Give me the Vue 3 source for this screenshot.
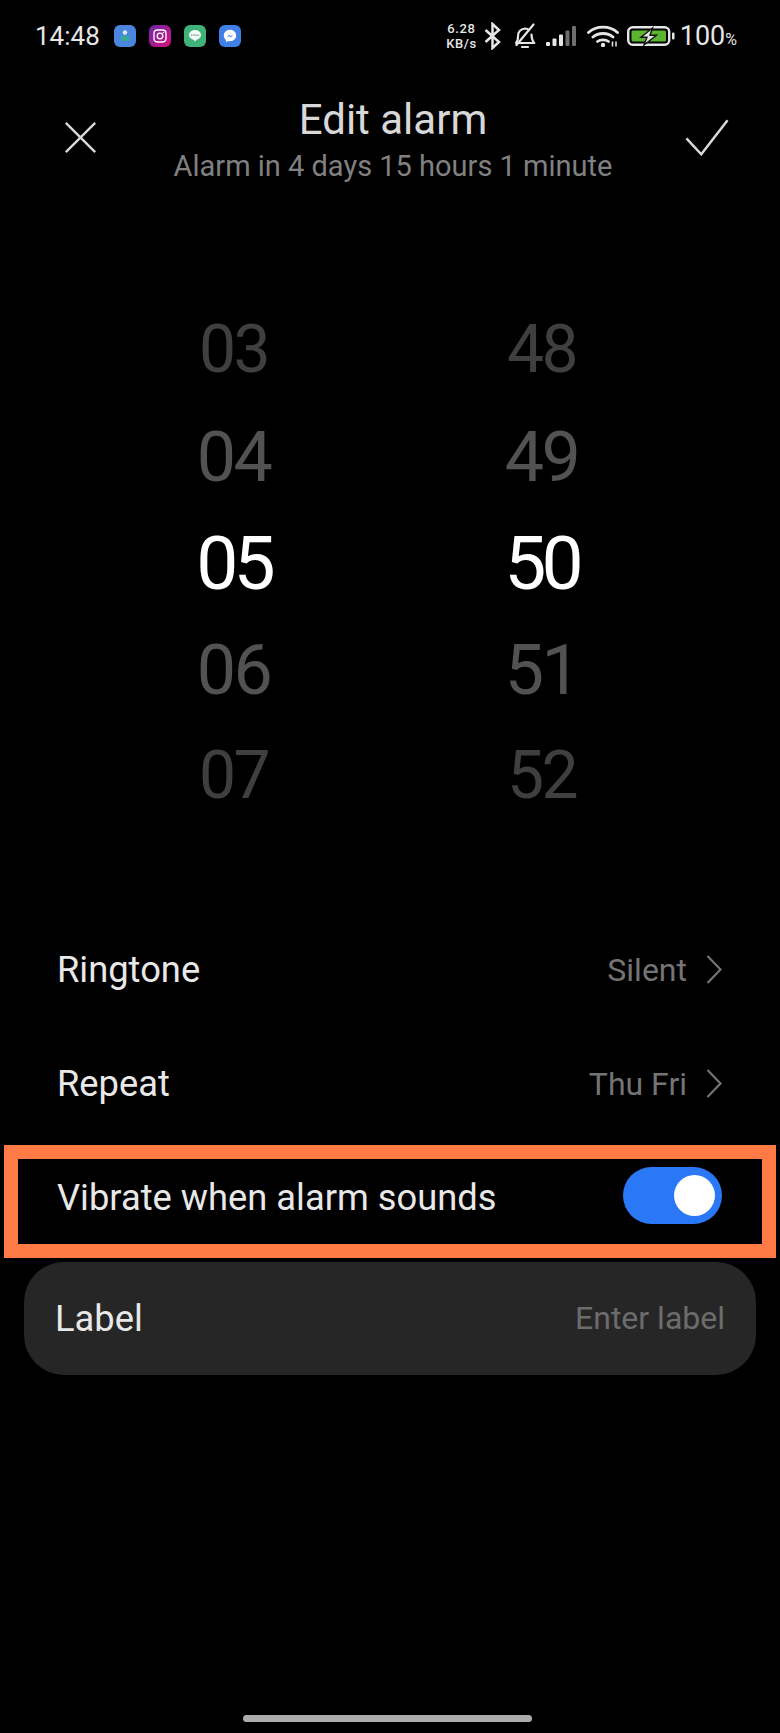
<script setup>
const hours = [
  { text: '03', level: 'far' },
  { text: '04', level: 'near' },
  { text: '05', level: 'current' },
  { text: '06', level: 'near' },
  { text: '07', level: 'far' },
]
const minutes = [
  { text: '48', level: 'far' },
  { text: '49', level: 'near' },
  { text: '50', level: 'current' },
  { text: '51', level: 'near' },
  { text: '52', level: 'far' },
]
</script>

<template>
  <div class="screen">
    <header class="status-bar">
      <div class="status-left">
        <span class="clock">14:48</span>
        <div class="app-icons">
          <svg class="app-icon" viewBox="0 0 22 22">
            <rect width="22" height="22" rx="6" fill="#4a86e0" />
            <circle cx="11" cy="7.5" r="2.2" fill="#dfeafa" />
            <path d="M6.5 16v-3.2c0-1.6 2-2.6 4.5-2.6s4.5 1 4.5 2.6V16z" fill="#37a69b" />
          </svg>
          <svg class="app-icon" viewBox="0 0 22 22">
            <defs>
              <linearGradient id="insta" x1="0" y1="0" x2="1" y2="1">
                <stop offset="0" stop-color="#6b28a8" />
                <stop offset="1" stop-color="#d8127c" />
              </linearGradient>
            </defs>
            <rect width="22" height="22" rx="6" fill="url(#insta)" />
            <rect x="5" y="5" width="12" height="12" rx="3.4" fill="none" stroke="#fff" stroke-width="1.3" />
            <circle cx="11" cy="11" r="2.8" fill="none" stroke="#fff" stroke-width="1.3" />
            <circle cx="14.5" cy="7.5" r=".8" fill="#fff" />
          </svg>
          <svg class="app-icon" viewBox="0 0 22 22">
            <rect width="22" height="22" rx="6" fill="#3fb27a" />
            <path d="M11 5c-3.4 0-6 2.2-6 5 0 2.6 2.2 4.500 5.200 4.900l.3 1.900 2.300-2.100c2.400-.7 4.200-2.500 4.200-4.700 0-2.800-2.600-5-6-5z" fill="#f2fbf6" />
            <path d="M7.800 9.400v1.500M10 9.400v1.500M12 9.400v1.500M14.200 9.400v1.500" stroke="#3f7f62" stroke-width=".9" />
          </svg>
          <svg class="app-icon" viewBox="0 0 22 22">
            <rect width="22" height="22" rx="6" fill="#3f7fe6" />
            <path d="M11 4.800c-3.500 0-6.200 2.500-6.200 5.800 0 1.800.8 3.300 2.100 4.300v2.300l2.100-1.200c.6.200 1.300.3 2 .3 3.500 0 6.200-2.500 6.200-5.700S14.500 4.800 11 4.800z" fill="#fff" />
            <path d="M7.600 12.500l2.500-2.800 1.600 1.500 2.700-1.700-2.500 2.900-1.600-1.500z" fill="#3f7fe6" />
          </svg>
        </div>
      </div>
      <div class="status-right">
        <div class="speed"><span>6.28</span><span>KB/s</span></div>
        <svg class="bt" viewBox="0 0 17 28">
          <path d="M1.500 8l13.500 12-6.500 6V2L15 8 1.500 20" fill="none" stroke="#e6e6e6" stroke-width="2.500" />
        </svg>
        <svg class="bell" viewBox="0 0 22 26">
          <path d="M2 20c1.500-1.500 2-3.500 2-6.500 0-4.500 2.500-7.500 7-8 1.500 0 3 .5 4 1.500M17.500 11.500c.2 3.800.6 6.500 2.800 8.500H2" fill="none" stroke="#e6e6e6" stroke-width="2.200" stroke-linejoin="round" stroke-linecap="round" />
          <path d="M8 24h6" stroke="#e6e6e6" stroke-width="2.200" stroke-linecap="round" />
          <path d="M2.500 22L19.500 1.500" stroke="#e6e6e6" stroke-width="2.200" stroke-linecap="round" />
        </svg>
        <svg class="signal" viewBox="0 0 30 20">
          <rect x="0" y="16" width="4" height="4" rx="1" fill="#e6e6e6" />
          <rect x="6.500" y="12.500" width="4" height="7.500" rx="1" fill="#e6e6e6" />
          <rect x="13" y="8.500" width="4" height="11.500" rx="1" fill="#e6e6e6" />
          <rect x="19.500" y="4.500" width="4" height="15.500" rx="1" fill="#6e6e6e" />
          <rect x="26" y="0" width="4" height="20" rx="1" fill="#6e6e6e" />
        </svg>
        <svg class="wifi" viewBox="0 0 32 22">
          <path d="M1.500 7.500c7.800-7.300 21.200-7.300 29 0M6 12c5.300-4.700 14.700-4.700 20 0M10.500 16.500c2.800-2.200 8.200-2.200 11 0" fill="none" stroke="#e6e6e6" stroke-width="2.800" stroke-linecap="round" />
          <circle cx="16" cy="20" r="2.200" fill="#e6e6e6" />
          <path d="M25.500 16.500v5M29 16.500v5" stroke="#e6e6e6" stroke-width="1.500" />
        </svg>
        <svg class="battery" viewBox="0 0 48 20">
          <rect x="1.200" y="1.200" width="41" height="17.600" rx="4.500" fill="none" stroke="#e6e6e6" stroke-width="2.400" />
          <rect x="4.500" y="4.500" width="34.500" height="11" rx="1.500" fill="#5cb531" />
          <path d="M25.500 2L14 11.200h6L17 19l12.500-9.800h-6.500z" fill="#e6e6e6" stroke="#111" stroke-width="1.400" />
          <rect x="45" y="6.500" width="2.500" height="7" rx="1" fill="#e6e6e6" />
        </svg>
        <span class="battery-level">100<small>%</small></span>
      </div>
    </header>

    <div class="title-bar">
      <svg class="bar-icon" viewBox="0 0 36 36">
        <path d="M2 2l32 32M34 2L2 34" fill="none" stroke="#d8d8d8" stroke-width="2.600" />
      </svg>
      <div class="title-text">
        <h1>Edit alarm</h1>
        <p>Alarm in 4 days 15 hours 1 minute</p>
      </div>
      <svg class="bar-icon check" viewBox="0 0 46 38">
        <path d="M1.500 20L17 36.500 44.500 1" fill="none" stroke="#d8d8d8" stroke-width="2.600" />
      </svg>
    </div>

    <div class="wheel">
      <div class="wheel-col">
        <div v-for="item in hours" :key="item.text" class="wheel-item" :class="item.level">{{ item.text }}</div>
      </div>
      <div class="wheel-col">
        <div v-for="item in minutes" :key="item.text" class="wheel-item" :class="item.level">{{ item.text }}</div>
      </div>
    </div>

    <div class="settings">
      <div class="row">
        <span class="row-name">Ringtone</span>
        <div class="row-value">
          <span>Silent</span>
          <svg class="chevron" viewBox="0 0 16 29"><path d="M1.500 1l13 13.500-13 13.500" fill="none" stroke="#747474" stroke-width="2.200" /></svg>
        </div>
      </div>
      <div class="row">
        <span class="row-name">Repeat</span>
        <div class="row-value">
          <span>Thu Fri</span>
          <svg class="chevron" viewBox="0 0 16 29"><path d="M1.500 1l13 13.500-13 13.500" fill="none" stroke="#747474" stroke-width="2.200" /></svg>
        </div>
      </div>
      <div class="row highlighted">
        <span class="row-name">Vibrate when alarm sounds</span>
        <div class="toggle"><span class="knob"></span></div>
      </div>
      <div class="label-card">
        <span class="row-name">Label</span>
        <span class="label-hint">Enter label</span>
      </div>
    </div>

    <div class="home-bar"></div>
  </div>
</template>

<style scoped>
.screen {
  position: relative;
  width: 780px;
  height: 1733px;
  background: #000;
  color: #fff;
  font-family: Roboto, "Noto Sans", sans-serif;
  overflow: hidden;
}

.status-bar {
  height: 72px;
  box-sizing: border-box;
  padding: 0 43px 0 35px;
  display: flex;
  align-items: center;
  justify-content: space-between;
}

.status-left {
  display: flex;
  align-items: center;
  gap: 14px;
}

.clock {
  font-size: 26px;
  color: #e6e6e6;
}

.app-icons {
  display: flex;
  gap: 13px;
}

.app-icon {
  width: 22px;
  height: 22px;
}

.status-right {
  display: flex;
  align-items: center;
}

.speed {
  display: flex;
  flex-direction: column;
  align-items: center;
  font-size: 13px;
  line-height: 15.500px;
  font-weight: 500;
  letter-spacing: .6px;
  color: #e6e6e6;
}

.bt {
  width: 17px;
  height: 28px;
  margin-left: 7px;
}

.bell {
  width: 22px;
  height: 26px;
  margin-left: 13px;
}

.signal {
  width: 30px;
  height: 20px;
  margin-left: 10px;
}

.wifi {
  width: 32px;
  height: 22px;
  margin-left: 11px;
}

.battery {
  width: 48px;
  height: 20px;
  margin-left: 8px;
}

.battery-level {
  margin-left: 5px;
  font-size: 27px;
  color: #e6e6e6;
}

.battery-level small {
  font-size: 16px;
}

.title-bar {
  height: 130px;
  padding: 0 51px 0 64px;
  display: flex;
  align-items: center;
  justify-content: space-between;
}

.bar-icon {
  width: 33px;
  height: 33px;
}

.check {
  width: 44px;
  height: 37px;
}

.title-text {
  margin: 11px 0 0 4px;
  text-align: center;
}

h1 {
  margin: 0;
  font-size: 42px;
  line-height: 46px;
  font-weight: 400;
  color: #d8d8d8;
}

p {
  margin: 0;
  font-size: 29px;
  line-height: 46px;
  color: #808080;
}

.wheel {
  margin-top: 95px;
  padding-left: 79.500px;
  display: grid;
  grid-template-columns: 308px 308px;
}

.wheel-item {
  height: 106.500px;
  line-height: 106.500px;
  text-align: center;
}

.far {
  font-size: 66px;
  letter-spacing: -2.500px;
  color: #3f3f3f;
}

.near {
  font-size: 70px;
  letter-spacing: -2.500px;
  color: #525252;
}

.current {
  font-size: 75px;
  letter-spacing: -5px;
  color: #fff;
}

.settings {
  margin-top: 83px;
}

.row {
  height: 114px;
  box-sizing: border-box;
  padding: 0 58px 0 57px;
  display: flex;
  align-items: center;
  justify-content: space-between;
}

.row-name {
  font-size: 36.300px;
  color: #e8e8e8;
}

.row-value {
  display: flex;
  align-items: center;
  gap: 19px;
  font-size: 32px;
  color: #747474;
}

.chevron {
  width: 16px;
  height: 29px;
}

.highlighted {
  margin: 4px 4px 0;
  height: 113px;
  padding: 0 40px 7px 39px;
  border: 14px solid #ff7a45;
}

.toggle {
  width: 99px;
  height: 57px;
  margin-bottom: 4px;
  box-sizing: border-box;
  padding-right: 7px;
  border-radius: 29px;
  background: #2a78f5;
  display: flex;
  align-items: center;
  justify-content: flex-end;
}

.knob {
  width: 41px;
  height: 41px;
  border-radius: 50%;
  background: #fff;
}

.label-card {
  margin: 4px 24px 0;
  height: 113px;
  box-sizing: border-box;
  padding: 0 31px;
  border-radius: 40px;
  background: #262626;
  display: flex;
  align-items: center;
  justify-content: space-between;
}

.label-hint {
  font-size: 32px;
  color: #6c6c6c;
}

.home-bar {
  position: absolute;
  left: 243px;
  bottom: 11px;
  width: 289px;
  height: 7px;
  border-radius: 4px;
  background: #acacac;
}
</style>
